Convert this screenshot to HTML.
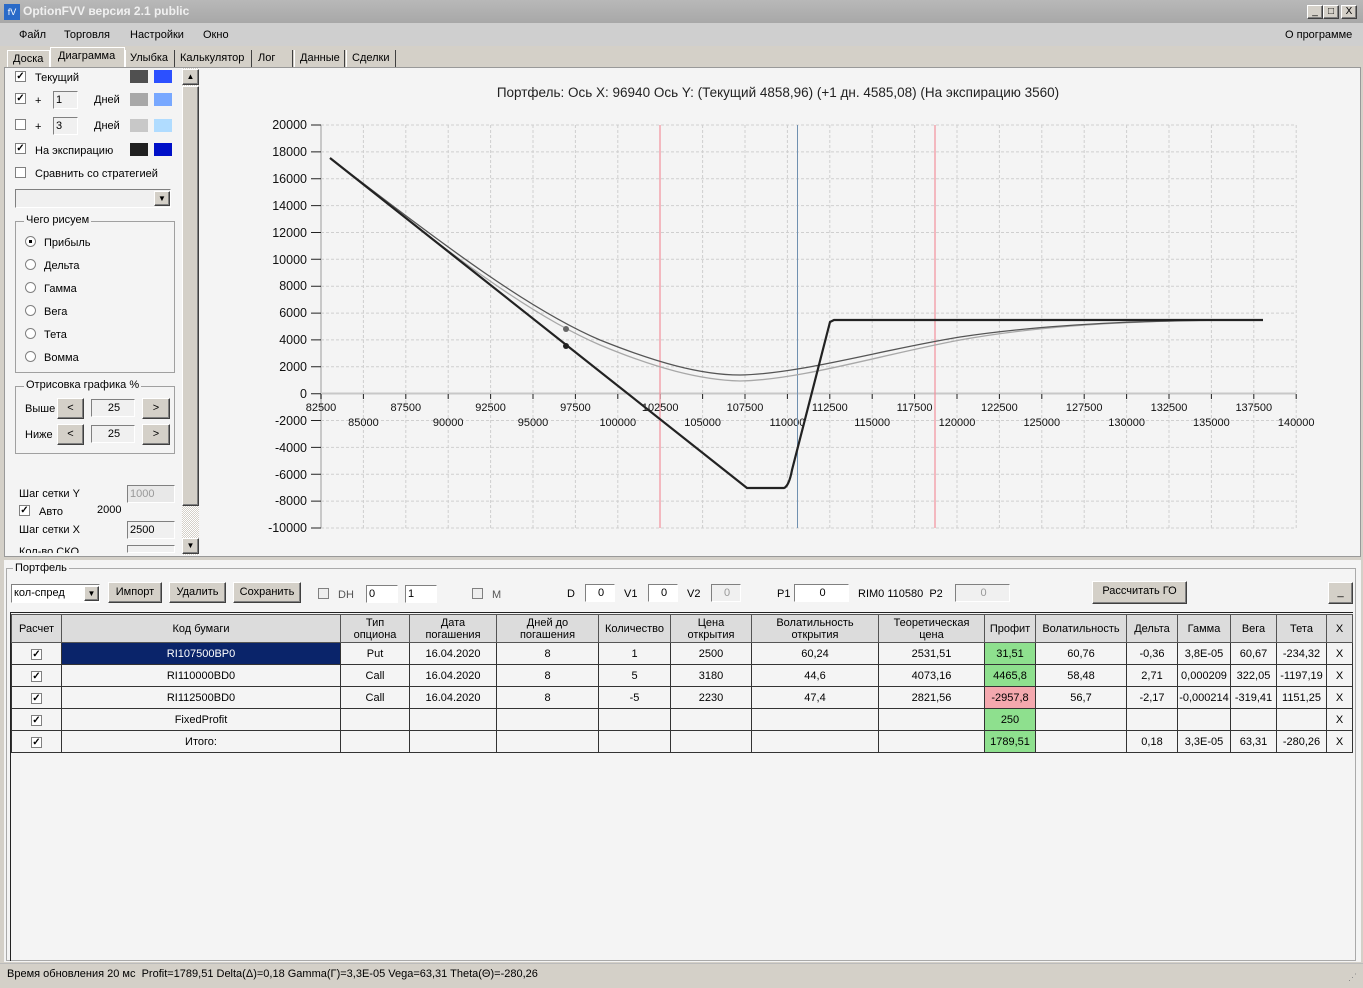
<!DOCTYPE html>
<html><head><meta charset="utf-8"><style>
*{box-sizing:border-box;margin:0;padding:0}
body{width:1363px;height:988px;overflow:hidden;background:#d4d0c8;font-family:"Liberation Sans",sans-serif;font-size:11px;color:#000;position:relative}
.a{position:absolute;white-space:nowrap}
.cb{position:absolute;width:11px;height:11px;border:1px solid #808080;background:#fff;font-size:10px;line-height:9px;text-align:center;font-weight:bold}
.sw{position:absolute;width:18px;height:13px}
.in{position:absolute;background:#f0f0f0;border:1px solid #808080;border-right-color:#fff;border-bottom-color:#fff;height:18px;line-height:16px;padding-left:2px}
.btn{position:absolute;background:#d4d0c8;border:1px solid;border-color:#fff #404040 #404040 #fff;text-align:center;line-height:18px;height:21px;box-shadow:inset -1px -1px #808080}
.grp{position:absolute;border:1px solid #a0a0a0}
.grp span{position:absolute;top:-8px;left:8px;background:#f4f4f4;padding:0 2px}
.rad{position:absolute;width:11px;height:11px;border-radius:50%;border:1px solid #808080;background:#fff}
table{border-collapse:collapse;position:absolute;left:11px;top:614px;table-layout:fixed}
td{border:1px solid #333;text-align:center;height:22px;font-size:11px;padding:0}
tr.h td{background:#dcdcdc;height:28px;line-height:12px;border-color:#555}
td.g{background:#8ee08e}td.r{background:#f4a8ae}
.x{background:#f4f4f4}
.ck{display:inline-block;width:11px;height:11px;border:1px solid #808080;background:#fff;font-size:10px;line-height:9px;font-weight:bold}
</style></head><body>
<div class="a" style="left:0;top:0;width:1363px;height:23px;background:linear-gradient(#b8b8b8,#a8a8a8)"></div>
<div class="a" style="left:4px;top:4px;width:16px;height:16px;background:#2a6ac8;color:#fff;font-size:9px;line-height:16px;text-align:center">fV</div>
<div class="a" style="left:23px;top:4px;font-weight:bold;color:#f0f0f0;font-size:12px">OptionFVV версия 2.1 public</div>
<div class="btn" style="left:1307px;top:5px;width:16px;height:14px;line-height:12px;font-size:10px">_</div>
<div class="btn" style="left:1323px;top:5px;width:16px;height:14px;line-height:12px;font-size:10px">□</div>
<div class="btn" style="left:1341px;top:5px;width:16px;height:14px;line-height:12px;font-size:10px">X</div>
<div class="a" style="left:0;top:23px;width:1363px;height:23px;background:#cfcfcf"></div>
<div class="a" style="left:19px;top:29px">Файл</div>
<div class="a" style="left:64px;top:29px">Торговля</div>
<div class="a" style="left:130px;top:29px">Настройки</div>
<div class="a" style="left:203px;top:29px">Окно</div>
<div class="a" style="left:1285px;top:29px">О программе</div>
<div class="a" style="left:7px;top:50px;width:43px;height:18px;border:1px solid #fff;border-bottom:none;padding:2px 0 0 5px">Доска</div>
<div class="a" style="left:50px;top:47px;width:75px;height:21px;border:1px solid #fff;border-bottom:none;padding:2px 0 0 7px;background:#d4d0c8">Диаграмма</div>
<div class="a" style="left:125px;top:50px;width:50px;height:18px;border-left:1px solid #fff;border-right:1px solid #404040;padding:2px 0 0 4px">Улыбка</div>
<div class="a" style="left:176px;top:50px;width:76px;height:18px;border-right:1px solid #404040;padding:2px 0 0 4px">Калькулятор</div>
<div class="a" style="left:253px;top:50px;width:40px;height:18px;border-right:1px solid #404040;padding:2px 0 0 5px">Лог</div>
<div class="a" style="left:294px;top:50px;width:51px;height:18px;border-left:1px solid #fff;border-right:1px solid #404040;padding:2px 0 0 5px">Данные</div>
<div class="a" style="left:346px;top:50px;width:50px;height:18px;border-left:1px solid #fff;border-right:1px solid #404040;padding:2px 0 0 5px">Сделки</div>
<div class="a" style="left:4px;top:67px;width:1357px;height:490px;background:#f4f4f4;border:1px solid #999"></div>
<div class="cb" style="left:15px;top:71px">✓</div><div class="a" style="left:35px;top:72px">Текущий</div>
<div class="sw" style="left:130px;top:70px;background:#505050"></div><div class="sw" style="left:154px;top:70px;background:#2c50ff"></div>
<div class="cb" style="left:15px;top:93px">✓</div><div class="a" style="left:35px;top:95px">+</div>
<div class="in" style="left:53px;top:91px;width:25px">1</div><div class="a" style="left:94px;top:94px">Дней</div>
<div class="sw" style="left:130px;top:93px;background:#a8a8a8"></div><div class="sw" style="left:154px;top:93px;background:#78a8ff"></div>
<div class="cb" style="left:15px;top:119px"></div><div class="a" style="left:35px;top:121px">+</div>
<div class="in" style="left:53px;top:117px;width:25px">3</div><div class="a" style="left:94px;top:120px">Дней</div>
<div class="sw" style="left:130px;top:119px;background:#c8c8c8"></div><div class="sw" style="left:154px;top:119px;background:#b0dcff"></div>
<div class="cb" style="left:15px;top:143px">✓</div><div class="a" style="left:35px;top:145px">На экспирацию</div>
<div class="sw" style="left:130px;top:143px;background:#202020"></div><div class="sw" style="left:154px;top:143px;background:#0010c8"></div>
<div class="cb" style="left:15px;top:167px"></div><div class="a" style="left:35px;top:168px">Сравнить со стратегией</div>
<div class="in" style="left:15px;top:189px;width:156px;height:19px"></div>
<div class="btn" style="left:154px;top:191px;width:16px;height:15px;font-size:8px;line-height:13px">▼</div>
<div class="grp" style="left:15px;top:221px;width:160px;height:152px"><span>Чего рисуем</span></div>
<div class="rad" style="left:25px;top:236px"><div style="width:3px;height:3px;background:#000;margin:3px"></div></div><div class="a" style="left:44px;top:237px">Прибыль</div>
<div class="rad" style="left:25px;top:259px"></div><div class="a" style="left:44px;top:260px">Дельта</div>
<div class="rad" style="left:25px;top:282px"></div><div class="a" style="left:44px;top:283px">Гамма</div>
<div class="rad" style="left:25px;top:305px"></div><div class="a" style="left:44px;top:306px">Вега</div>
<div class="rad" style="left:25px;top:328px"></div><div class="a" style="left:44px;top:329px">Тета</div>
<div class="rad" style="left:25px;top:351px"></div><div class="a" style="left:44px;top:352px">Вомма</div>
<div class="grp" style="left:15px;top:386px;width:160px;height:68px"><span>Отрисовка графика %</span></div>
<div class="a" style="left:25px;top:403px">Выше</div>
<div class="btn" style="left:57px;top:398px;width:27px">&lt;</div>
<div class="in" style="left:91px;top:399px;width:44px;text-align:center">25</div>
<div class="btn" style="left:142px;top:398px;width:28px">&gt;</div>
<div class="a" style="left:25px;top:429px">Ниже</div>
<div class="btn" style="left:57px;top:424px;width:27px">&lt;</div>
<div class="in" style="left:91px;top:425px;width:44px;text-align:center">25</div>
<div class="btn" style="left:142px;top:424px;width:28px">&gt;</div>
<div class="a" style="left:19px;top:488px">Шаг сетки Y</div>
<div class="in" style="left:127px;top:485px;width:48px;color:#999;background:#e8e8e8">1000</div>
<div class="cb" style="left:19px;top:505px">✓</div><div class="a" style="left:39px;top:506px">Авто</div><div class="a" style="left:97px;top:504px">2000</div>
<div class="a" style="left:19px;top:524px">Шаг сетки X</div>
<div class="in" style="left:127px;top:521px;width:48px">2500</div>
<div class="a" style="left:19px;top:546px;height:7px;overflow:hidden">Кол-во СКО</div>
<div class="in" style="left:127px;top:545px;width:48px;height:8px"></div>
<div class="a" style="left:182px;top:68px;width:17px;height:487px;background:repeating-conic-gradient(#d4d0c8 0 25%,#fff 0 50%) 0 0/2px 2px"></div>
<div class="btn" style="left:182px;top:69px;width:17px;height:16px;font-size:8px;line-height:14px">▲</div>
<div class="btn" style="left:182px;top:86px;width:17px;height:420px"></div>
<div class="btn" style="left:182px;top:538px;width:17px;height:16px;font-size:8px;line-height:14px">▼</div>
<svg class="a" style="left:0;top:0" width="1363" height="560" font-family="Liberation Sans, sans-serif" font-size="12">
<text x="778" y="97" text-anchor="middle" font-size="13.5" fill="#222">Портфель: Ось X: 96940 Ось Y:  (Текущий 4858,96)  (+1 дн. 4585,08)  (На экспирацию 3560)</text>
<g stroke="#cfcfcf" stroke-dasharray="3,2" stroke-width="1">
<path d="M321 125H1296M321 151.9H1296M321 178.7H1296M321 205.6H1296M321 232.5H1296M321 259.3H1296M321 286.2H1296M321 313.1H1296M321 339.9H1296M321 366.8H1296M321 420.5H1296M321 447.4H1296M321 474.3H1296M321 501.1H1296M321 528H1296"/>
<path d="M363.4 125V528M405.8 125V528M448.2 125V528M490.6 125V528M533 125V528M575.4 125V528M617.8 125V528M702.6 125V528M745 125V528M787.4 125V528M829.8 125V528M872.2 125V528M914.6 125V528M957 125V528M999.4 125V528M1041.8 125V528M1084.2 125V528M1126.6 125V528M1169 125V528M1211.4 125V528M1253.8 125V528M1296.2 125V528"/>
</g>
<path d="M321 125V528" stroke="#c8c8c8" stroke-width="2"/>
<path d="M321 393.5H1296" stroke="#c8c8c8" stroke-width="2"/>
<g stroke="#222"><path d="M311 125h10M311 151.9h10M311 178.7h10M311 205.6h10M311 232.5h10M311 259.3h10M311 286.2h10M311 313.1h10M311 339.9h10M311 366.8h10M311 393.7h10M311 420.5h10M311 447.4h10M311 474.3h10M311 501.1h10M311 528h10"/>
<path d="M321 394v5M363.4 394v5M405.8 394v5M448.2 394v5M490.6 394v5M533 394v5M575.4 394v5M617.8 394v5M660.2 394v5M702.6 394v5M745 394v5M787.4 394v5M829.8 394v5M872.2 394v5M914.6 394v5M957 394v5M999.4 394v5M1041.8 394v5M1084.2 394v5M1126.6 394v5M1169 394v5M1211.4 394v5M1253.8 394v5M1296.2 394v5"/></g>
<g text-anchor="end" fill="#111" font-size="12.5">
<text x="307" y="129">20000</text><text x="307" y="156">18000</text><text x="307" y="183">16000</text><text x="307" y="210">14000</text><text x="307" y="237">12000</text><text x="307" y="264">10000</text><text x="307" y="290">8000</text><text x="307" y="317">6000</text><text x="307" y="344">4000</text><text x="307" y="371">2000</text><text x="307" y="398">0</text><text x="307" y="425">-2000</text><text x="307" y="452">-4000</text><text x="307" y="479">-6000</text><text x="307" y="505">-8000</text><text x="307" y="532">-10000</text></g>
<g text-anchor="middle" fill="#111" font-size="11">
<text x="321" y="411">82500</text><text x="405.8" y="411">87500</text><text x="490.6" y="411">92500</text><text x="575.4" y="411">97500</text><text x="660.2" y="411">102500</text><text x="745" y="411">107500</text><text x="829.8" y="411">112500</text><text x="914.6" y="411">117500</text><text x="999.4" y="411">122500</text><text x="1084.2" y="411">127500</text><text x="1169" y="411">132500</text><text x="1253.8" y="411">137500</text>
<text x="363.4" y="426">85000</text><text x="448.2" y="426">90000</text><text x="533" y="426">95000</text><text x="617.8" y="426">100000</text><text x="702.6" y="426">105000</text><text x="787.4" y="426">110000</text><text x="872.2" y="426">115000</text><text x="957" y="426">120000</text><text x="1041.8" y="426">125000</text><text x="1126.6" y="426">130000</text><text x="1211.4" y="426">135000</text><text x="1296.2" y="426">140000</text></g>
<path d="M660 125V528M935 125V528" stroke="#f2909c" stroke-width="1.2"/>
<path d="M797.5 125V528" stroke="#7090b0"/>
<path d="M330 158 C450 255 530 315 600 345 C655 368 700 380 740 381 C800 380 880 355 960 340 C1060 322 1170 320 1263 320" fill="none" stroke="#a8a8a8" stroke-width="1.3"/>
<path d="M330 158 C450 250 530 310 600 340 C655 362 700 375 740 375 C800 374 880 350 960 337 C1060 322 1170 320 1263 320" fill="none" stroke="#555" stroke-width="1.3"/>
<path d="M330 158 L747 488 L784 488 Q789 486 792 470 L830 322 L834 320 L1263 320" fill="none" stroke="#222" stroke-width="2.2"/>
<circle cx="566" cy="329" r="3" fill="#666"/><circle cx="566" cy="346" r="3" fill="#222"/>
</svg>
<div class="a" style="left:4px;top:560px;width:1357px;height:402px;background:#f4f4f4"></div>
<div class="grp" style="left:6px;top:568px;width:1350px;height:393px;border-color:#aaa"><span style="left:6px;top:-7px">Портфель</span></div>
<div class="in" style="left:11px;top:584px;width:89px;background:#fff;height:19px">кол-спред</div>
<div class="btn" style="left:84px;top:586px;width:15px;height:15px;font-size:8px;line-height:13px">▼</div>
<div class="btn" style="left:108px;top:582px;width:54px">Импорт</div>
<div class="btn" style="left:169px;top:582px;width:57px">Удалить</div>
<div class="btn" style="left:233px;top:582px;width:68px">Сохранить</div>
<div class="cb" style="left:318px;top:588px;background:#eee"></div><div class="a" style="left:338px;top:589px;color:#555">DH</div>
<div class="in" style="left:366px;top:585px;width:32px;background:#fff">0</div>
<div class="in" style="left:405px;top:585px;width:32px;background:#fff">1</div>
<div class="cb" style="left:472px;top:588px;background:#eee"></div><div class="a" style="left:492px;top:589px;color:#555">M</div>
<div class="a" style="left:567px;top:588px">D</div><div class="in" style="left:585px;top:584px;width:30px;background:#fff;text-align:center">0</div>
<div class="a" style="left:624px;top:588px">V1</div><div class="in" style="left:648px;top:584px;width:30px;background:#fff;text-align:center">0</div>
<div class="a" style="left:687px;top:588px">V2</div><div class="in" style="left:711px;top:584px;width:30px;text-align:center;color:#999">0</div>
<div class="a" style="left:777px;top:588px">P1</div><div class="in" style="left:794px;top:584px;width:55px;background:#fff;text-align:center">0</div>
<div class="a" style="left:858px;top:588px">RIM0 110580 &nbsp;P2</div><div class="in" style="left:955px;top:584px;width:55px;text-align:center;color:#999">0</div>
<div class="btn" style="left:1092px;top:581px;width:95px;height:23px">Рассчитать ГО</div>
<div class="btn" style="left:1328px;top:582px;width:25px;height:22px">_</div>
<div class="a" style="left:10px;top:612px;width:1343px;height:349px;border:1px solid #222;border-right:none;border-bottom:none"></div>
<table>
<colgroup><col style="width:50px"><col style="width:279px"><col style="width:69px"><col style="width:87px"><col style="width:102px"><col style="width:72px"><col style="width:81px"><col style="width:127px"><col style="width:106px"><col style="width:51px"><col style="width:91px"><col style="width:51px"><col style="width:53px"><col style="width:46px"><col style="width:50px"><col style="width:26px"></colgroup>
<tr class="h"><td>Расчет</td><td>Код бумаги</td><td>Тип<br>опциона</td><td>Дата<br>погашения</td><td>Дней до<br>погашения</td><td>Количество</td><td>Цена<br>открытия</td><td>Волатильность<br>открытия</td><td>Теоретическая<br>цена</td><td>Профит</td><td>Волатильность</td><td>Дельта</td><td>Гамма</td><td>Вега</td><td>Тета</td><td>X</td></tr>
<tr><td><span class="ck">✓</span></td><td style="background:#0a246a;color:#fff">RI107500BP0</td><td>Put</td><td>16.04.2020</td><td>8</td><td>1</td><td>2500</td><td>60,24</td><td>2531,51</td><td class="g">31,51</td><td>60,76</td><td>-0,36</td><td>3,8E-05</td><td>60,67</td><td>-234,32</td><td class="x">X</td></tr>
<tr><td><span class="ck">✓</span></td><td>RI110000BD0</td><td>Call</td><td>16.04.2020</td><td>8</td><td>5</td><td>3180</td><td>44,6</td><td>4073,16</td><td class="g">4465,8</td><td>58,48</td><td>2,71</td><td>0,000209</td><td>322,05</td><td>-1197,19</td><td class="x">X</td></tr>
<tr><td><span class="ck">✓</span></td><td>RI112500BD0</td><td>Call</td><td>16.04.2020</td><td>8</td><td>-5</td><td>2230</td><td>47,4</td><td>2821,56</td><td class="r">-2957,8</td><td>56,7</td><td>-2,17</td><td>-0,000214</td><td>-319,41</td><td>1151,25</td><td class="x">X</td></tr>
<tr><td><span class="ck">✓</span></td><td>FixedProfit</td><td></td><td></td><td></td><td></td><td></td><td></td><td></td><td class="g">250</td><td></td><td></td><td></td><td></td><td></td><td class="x">X</td></tr>
<tr><td><span class="ck">✓</span></td><td>Итого:</td><td></td><td></td><td></td><td></td><td></td><td></td><td></td><td class="g">1789,51</td><td></td><td>0,18</td><td>3,3E-05</td><td>63,31</td><td>-280,26</td><td class="x">X</td></tr>
</table>
<div class="a" style="left:0;top:963px;width:1363px;height:25px;background:#d4d0c8;border-top:1px solid #bbb"></div>
<div class="a" style="left:7px;top:968px">Время обновления 20 мс &nbsp;Profit=1789,51 Delta(Δ)=0,18 Gamma(Γ)=3,3E-05 Vega=63,31 Theta(Θ)=-280,26</div>
<div class="a" style="left:1348px;top:972px;color:#888;font-size:9px">⋰</div>
</body></html>
